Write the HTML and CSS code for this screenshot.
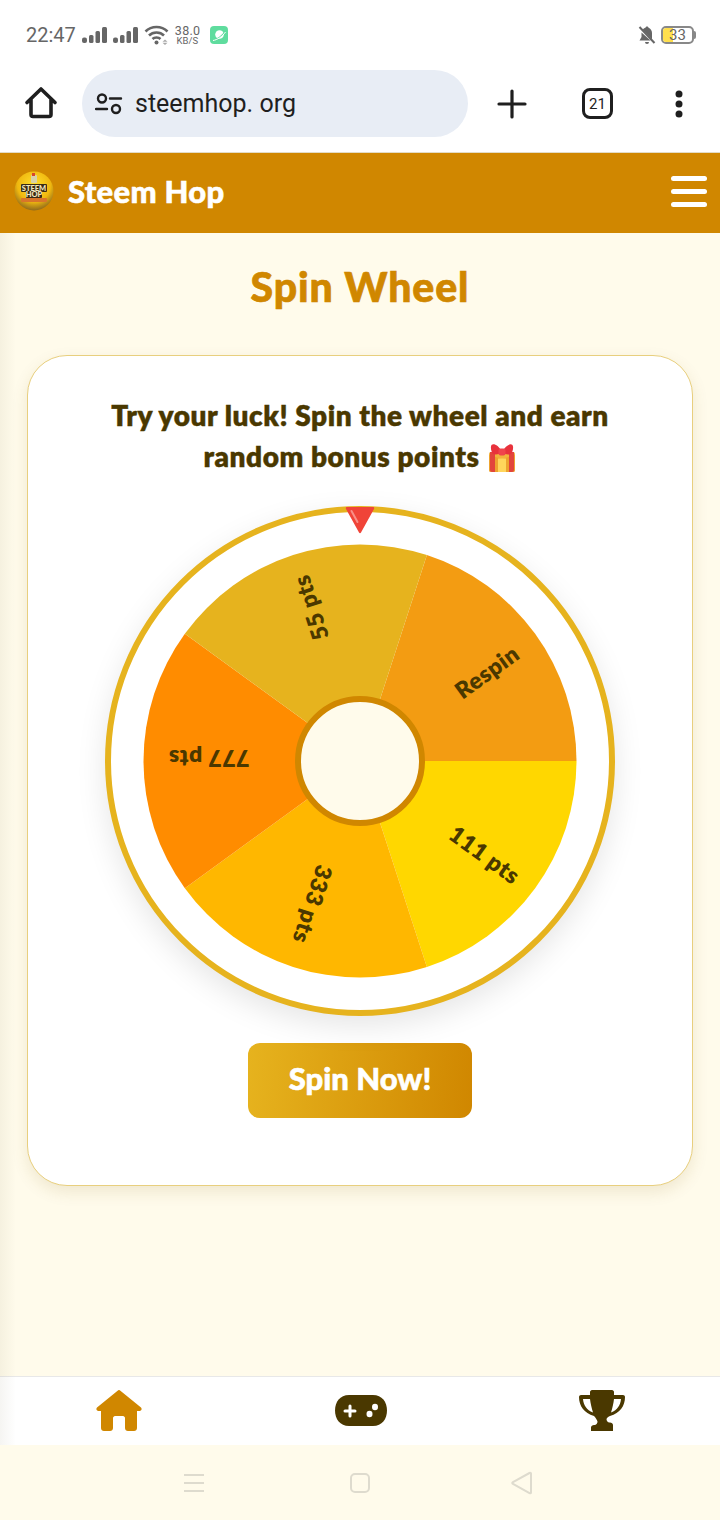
FILE: index.html
```html
<!DOCTYPE html>
<html>
	<head>
		<meta charset="UTF-8">
		<title>Steem Hop</title>
		<link rel="stylesheet" href="styles.css">
	</head>
	<body>
		<div class="status">
			<div class="status-left">
				<span class="time">22:47</span>
				<svg class="signal" width="25" height="18" viewBox="0 0 25 18"><rect x="0" y="11.500" width="5" height="5.500" rx="2"/><rect x="7" y="9" width="4.500" height="8" rx="1.500"/><rect x="13.500" y="5" width="4.500" height="12" rx="1.500"/><rect x="20" y="1" width="5" height="16" rx="1.500"/></svg>
				<svg class="signal" width="25" height="18" viewBox="0 0 25 18"><rect x="0" y="11.500" width="5" height="5.500" rx="2"/><rect x="7" y="9" width="4.500" height="8" rx="1.500"/><rect x="13.500" y="5" width="4.500" height="12" rx="1.500"/><rect x="20" y="1" width="5" height="16" rx="1.500"/></svg>
				<svg class="wifi" width="25" height="20" viewBox="0 0 25 20"><path d="M1.500 6.500C7.500 .5 17.500 .5 23.500 6.500M5 10.500C9 6.500 16 6.500 20 10.500M8.500 14C10.500 12 14.500 12 16.500 14" fill="none" stroke="#666" stroke-width="2.600"/><circle cx="12.500" cy="17.500" r="2" fill="#666"/><path d="M21 14.500l2.500 2.300h-5zM21 20l2.500-2.300h-5z" fill="#aaa"/></svg>
				<span class="speed"><b>38.0</b><i>KB/S</i></span>
				<svg class="app-dot" width="18" height="18" viewBox="0 0 18 18"><rect width="18" height="18" rx="4" fill="#5fdc9e"/><circle cx="9.500" cy="8.500" r="4.300" fill="#fff"/><path d="M3 13.500C7 13.500 12 10 15.500 5" stroke="#5fdc9e" stroke-width="1.300" fill="none"/><path d="M3 14.500C7 14 12.500 10.500 15.500 6" stroke="#fff" stroke-width="1" fill="none"/></svg>
			</div>
			<div class="status-right">
				<svg width="18" height="20" viewBox="0 0 18 20"><path d="M9 1.500c-1 0-1.500.6-1.500 1.300C6.300 3 5.300 3.700 4.800 4.500L14 14.500V8c0-2.500-1.500-4.500-3.500-5.200 0-.7-.5-1.300-1.500-1.300zM3.500 7.500V12L1.500 15.500h11zM7 17a2 2 0 0 0 4 0z" fill="#666"/><path d="M1.500 2l15 16" stroke="#666" stroke-width="2"/></svg>
				<span class="battery"><span class="battery-fill"></span><span class="battery-num">33</span></span>
			</div>
		</div>

		<div class="toolbar">
			<svg width="34" height="34" viewBox="0 0 34 34"><path d="M3 16.500L17 3l14 13.500M7 13v15.500a2 2 0 0 0 2 2h16a2 2 0 0 0 2-2V13" fill="none" stroke="#1f1f1f" stroke-width="3.600" stroke-linejoin="round" stroke-linecap="round"/></svg>
			<div class="url">
				<svg width="28" height="24" viewBox="0 0 28 24"><circle cx="7" cy="6.500" r="4" fill="none" stroke="#1f1f1f" stroke-width="2.400"/><path d="M15 6.500h11M1 17h11" stroke="#1f1f1f" stroke-width="2.400" stroke-linecap="round"/><circle cx="21" cy="17" r="4" fill="none" stroke="#1f1f1f" stroke-width="2.400"/></svg>
				<span>steemhop. org</span>
			</div>
			<div class="tool-btns">
				<svg width="30" height="30" viewBox="0 0 30 30"><path d="M15 2v26M2 15h26" stroke="#1f1f1f" stroke-width="3.200" stroke-linecap="round"/></svg>
				<span class="tabs">21</span>
				<svg width="10" height="30" viewBox="0 0 10 30"><circle cx="5" cy="5" r="3.500" fill="#1f1f1f"/><circle cx="5" cy="15" r="3.500" fill="#1f1f1f"/><circle cx="5" cy="25" r="3.500" fill="#1f1f1f"/></svg>
			</div>
		</div>

		<header class="top">
			<div class="brand">
				<svg class="logo" width="40" height="42" viewBox="0 0 40 42">
					<defs>
						<radialGradient id="ball" cx="50%" cy="35%" r="65%">
							<stop offset="0" stop-color="#ffe02e"/>
							<stop offset="0.65" stop-color="#f0b80f"/>
							<stop offset="1" stop-color="#8f6a1c"/>
						</radialGradient>
					</defs>
					<circle cx="20" cy="21" r="19.500" fill="url(#ball)"/>
					<rect x="17" y="5" width="6" height="8" rx="1" fill="#d9d2a8"/>
					<rect x="18" y="3" width="3" height="3" fill="#d8452c"/>
					<rect x="7" y="14" width="26" height="8" rx="1" fill="#3a2c14"/>
					<rect x="12" y="21" width="16" height="7" rx="1" fill="#3a2c14"/>
					<rect x="7" y="28" width="26" height="4" rx="1" fill="#d9752a"/>
					<text class="logo-text" x="20" y="20.500">STEEM</text>
					<text class="logo-text" x="20" y="27">HOP</text>
				</svg>
				<span class="brand-name">Steem Hop</span>
			</div>
			<div class="burger"><i></i><i></i><i></i></div>
		</header>

		<main class="content">
			<h1>Spin Wheel</h1>
			<section class="card">
				<p class="lead">Try your luck! Spin the wheel and earn random bonus points
					<svg class="gift" width="30" height="30" viewBox="0 0 30 30"><rect x="2" y="9" width="26" height="20" rx="2" fill="#f2b33d"/><path d="M2 12l13 4 13-4v15a2 2 0 0 1-2 2H4a2 2 0 0 1-2-2z" fill="#eda32f"/><path d="M11 15.500h8V29h-8z" fill="#ffd65c"/><path d="M3 9h5v20H5a2 2 0 0 1-2-2z" fill="#e2453c"/><path d="M22 9h5v18a2 2 0 0 1-2 2h-3z" fill="#e2453c"/><path d="M15 9C11 1 4.500 -.5 4 3.500c-.5 3 1 6.500 2 7.500 3 1 6 .5 9-2z" fill="#e8323c"/><path d="M15 9c4-8 10.500-9.500 11-5.500.5 3-1 6.500-2 7.500-3 1-6 .5-9-2z" fill="#e8323c"/><rect x="11.500" y="5.500" width="7" height="7" rx="2" fill="#f0454c"/></svg>
				</p>
				<div class="wheel-box">
					<svg class="pointer" width="30" height="28" viewBox="0 0 30 28"><path d="M2 1h26c1 0 1.500 1 1 2L16 26.500c-.5 1-1.500 1-2 0L1 3c-.5-1 0-2 1-2z" fill="#f04438"/><path d="M6.500 5l6 11" stroke="#f98f87" stroke-width="2" stroke-linecap="round"/></svg>
					<div class="wheel">
						<svg width="498" height="498" viewBox="0 0 498 498">
							<path d="M249 249L315.900 43.100A216.500 216.500 0 0 1 465.500 249Z" fill="#f39c12"/>
							<path d="M249 249L465.500 249A216.500 216.500 0 0 1 315.900 454.900Z" fill="#ffd700"/>
							<path d="M249 249L315.900 454.900A216.500 216.500 0 0 1 73.850 376.260Z" fill="#ffb700"/>
							<path d="M249 249L73.850 376.260A216.500 216.500 0 0 1 73.850 121.740Z" fill="#ff8c00"/>
							<path d="M249 249L73.850 121.740A216.500 216.500 0 0 1 315.900 43.100Z" fill="#e6b31e"/>
							<g class="labels">
								<text x="404" y="251" transform="rotate(-36 249 249)">Respin</text>
								<text x="405" y="251" transform="rotate(36 249 249)">111 pts</text>
								<text x="400" y="249" transform="rotate(108 249 249)">333 pts</text>
								<text x="400" y="251" transform="rotate(180 249 249)">777 pts</text>
								<text x="410" y="249" transform="rotate(252 249 249)">55 pts</text>
							</g>
							<circle cx="249" cy="249" r="62" fill="#fffbeb" stroke="#d08700" stroke-width="6"/>
						</svg>
					</div>
				</div>
				<button class="spin"><span>Spin Now!</span></button>
			</section>
		</main>

		<nav class="tabs-bar">
			<svg width="46" height="41" viewBox="0 0 46 41"><path d="M23 0c.6 0 1 .3 1.400.7L45 17.500c1.200 1.300.6 3.500-1.500 3.500H41v17c0 1.700-1.300 3-3 3h-6c-1.700 0-3-1.300-3-3V28c0-1-1-2-2-2h-8c-1 0-2 1-2 2v10c0 1.700-1.300 3-3 3H8c-1.700 0-3-1.300-3-3V21H2.500C.4 21-.2 18.800 1 17.500L21.600.7C22 .3 22.400 0 23 0z" fill="#d08700"/></svg>
			<svg width="52" height="31" viewBox="0 0 52 31"><path d="M14 0h24c9 0 14 7 14 15.500S47 31 38 31H14C5 31 0 24 0 15.500S5 0 14 0z" fill="#4a3800"/><path d="M15 11v10M10 16h10" stroke="#fff" stroke-width="3" stroke-linecap="round"/><ellipse cx="40" cy="12" rx="3" ry="3.300" fill="#fff"/><ellipse cx="34.500" cy="19" rx="3" ry="3.300" fill="#fff"/></svg>
			<svg width="46" height="41" viewBox="0 0 46 41"><path fill-rule="evenodd" d="M11 2c0-1 1-2 2-2h20c1 0 2 1 2 2v3h9c1 0 2 .8 2 2 0 9-5 16-15 19-1.500.6-3 1.500-3.500 3 0 2 1 3 2.500 3.500h1c1.500 0 3 1 3 2.500V41H12v-3.500c0-1.500 1.500-2.500 3-2.500h1c1.500-.5 2.500-1.500 2.500-3.500C18 30 16.500 27.500 15 26 5 23 0 16 0 7c0-1.200 1-2 2-2h9zM4 9c.5 6 3.500 11 10 13.500C12.500 18 11.500 13 11 9zm38 0h-7c-.5 4-1.500 9-3 13.500C38.500 20 41.500 15 42 9z" fill="#4a3800"/></svg>
		</nav>

		<div class="sys-nav">
			<svg width="22" height="20" viewBox="0 0 22 20"><path d="M1 2h20M1 10h20M1 18h20" stroke="#dedbce" stroke-width="2"/></svg>
			<svg width="22" height="22" viewBox="0 0 22 22"><rect x="2" y="2" width="18" height="18" rx="4" fill="none" stroke="#dedbce" stroke-width="2"/></svg>
			<svg class="sys-back" width="24" height="24" viewBox="0 0 24 24"><path d="M21 2.500v19c0 1-.8 1-1.500.5L3 13c-1-.7-1-1.300 0-2L19.500 2c.7-.4 1.500 0 1.500.5z" fill="none" stroke="#dedbce" stroke-width="2"/></svg>
		</div>

		<div class="side-shade"></div>
	</body>
</html>
```

FILE: styles.css
```css
* {
	box-sizing: border-box;
}

body {
	margin: 0;
	width: 720px;
	height: 1520px;
	overflow: hidden;
	display: flex;
	flex-direction: column;
	position: relative;
	background: #fffbeb;
	font-family: "Lato", "Noto Sans", sans-serif;
	color: #4a3800;
}

/* status bar */
.status {
	height: 70px;
	flex: none;
	background: #fff;
	display: flex;
	justify-content: space-between;
	align-items: center;
	padding: 0 26px 0 26px;
}

.status-left {
	display: flex;
	align-items: center;
	gap: 6px;
}

.status-right {
	display: flex;
	align-items: center;
	gap: 5px;
}

.time {
	font: 20px "Roboto", sans-serif;
	color: #666;
}

.signal {
	fill: #666;
}

.speed {
	display: flex;
	flex-direction: column;
	width: 25px;
	font-family: "Roboto", sans-serif;
	color: #666;
	text-align: center;
}

.speed b {
	font-size: 12.5px;
	font-weight: 400;
	letter-spacing: 0.3px;
	line-height: 11px;
}

.speed i {
	font-size: 9.5px;
	font-style: normal;
	line-height: 10px;
}

.app-dot {
	margin-left: 4px;
}

.battery {
	width: 33px;
	height: 18px;
	border: 2px solid #888;
	border-radius: 5px;
	position: relative;
	display: flex;
	align-items: center;
	justify-content: center;
	font: 15px "Roboto", sans-serif;
	color: #666;
}

.battery::after {
	content: "";
	position: absolute;
	right: -4px;
	top: 3px;
	width: 2px;
	height: 8px;
	border-radius: 0 2px 2px 0;
	background: #888;
}

.battery-fill {
	position: absolute;
	left: 0;
	top: 0;
	bottom: 0;
	width: 10px;
	border-radius: 3px 0 0 3px;
	background: #ffdf4d;
}

.battery-num {
	position: relative;
}

/* browser toolbar */
.toolbar {
	height: 83px;
	flex: none;
	background: #fff;
	border-bottom: 1px solid #e3dcc6;
	display: flex;
	align-items: flex-start;
	padding-left: 24px;
}

.toolbar > svg {
	margin-top: 16px;
}

.url {
	width: 386px;
	height: 67px;
	margin-left: 24px;
	border-radius: 34px;
	background: #e8edf5;
	display: flex;
	align-items: center;
	gap: 12px;
	padding-left: 13px;
	font: 25px "Roboto", sans-serif;
	color: #1f1f1f;
}

.tool-btns {
	display: flex;
	align-items: center;
	height: 67px;
	margin-left: 29px;
	gap: 55px;
}

.tool-btns svg:last-child {
	margin-left: 6px;
}

.tabs {
	width: 31px;
	height: 31px;
	border: 3.500px solid #1f1f1f;
	border-radius: 8px;
	display: flex;
	align-items: center;
	justify-content: center;
	font: 15px "Roboto", sans-serif;
	color: #1f1f1f;
}

/* site header */
.top {
	height: 80px;
	flex: none;
	background: #d08700;
	display: flex;
	justify-content: space-between;
	align-items: center;
	padding: 0 13px 4px 14px;
}

.brand {
	display: flex;
	align-items: center;
	gap: 14px;
}

.logo-text {
	font-size: 7.5px;
	font-weight: 900;
	fill: #f3e7c0;
	text-anchor: middle;
}

.brand-name {
	font-size: 31px;
	font-weight: 900;
	letter-spacing: 0.3px;
	color: #fff;
	-webkit-text-stroke: 0.6px #fff;
}

.burger {
	display: flex;
	flex-direction: column;
	gap: 8px;
}

.burger i {
	display: block;
	width: 36px;
	height: 5px;
	border-radius: 3px;
	background: #fff;
}

/* main */
.content {
	flex: 1;
	padding: 0 27px;
}

h1 {
	margin: 30px 0 44px;
	height: 48px;
	font-size: 41px;
	line-height: 48px;
	font-weight: 900;
	letter-spacing: 0.9px;
	text-align: center;
	color: #d08700;
	-webkit-text-stroke: 0.7px #d08700;
}

.card {
	height: 831px;
	background: #fff;
	border: 1px solid #e8cf7e;
	border-radius: 40px;
	box-shadow: 0 6px 16px rgba(120, 90, 0, 0.12);
	padding: 39px 70px 0;
	display: flex;
	flex-direction: column;
	align-items: center;
}

.lead {
	margin: 0;
	font-size: 28px;
	line-height: 41px;
	font-weight: 800;
	letter-spacing: 0.55px;
	text-align: center;
	-webkit-text-stroke: 0.4px #4a3800;
}

.gift {
	vertical-align: -6px;
}

.wheel-box {
	margin-top: 29px;
	width: 510px;
	height: 510px;
	flex: none;
	position: relative;
}

.wheel {
	width: 510px;
	height: 510px;
	border: 6px solid #e6b31e;
	border-radius: 50%;
	background: #fff;
	box-shadow: 0 10px 30px rgba(0, 0, 0, 0.1);
}

.wheel svg {
	display: block;
}

.labels text {
	font-size: 23px;
	font-weight: 800;
	letter-spacing: 0.5px;
	fill: #4a3800;
	text-anchor: middle;
	dominant-baseline: central;
}

.pointer {
	position: absolute;
	left: 240px;
	top: 0;
	z-index: 2;
}

.spin {
	margin-top: 27px;
	width: 224px;
	height: 75px;
	flex: none;
	padding: 0 0 6px;
	border: 0;
	border-radius: 12px;
	background: linear-gradient(95deg, #e6b31e, #d08700);
	font-family: inherit;
	font-size: 31px;
	font-weight: 900;
	color: #fff;
	-webkit-text-stroke: 0.6px #fff;
}

/* bottom tabs */
.tabs-bar {
	height: 69px;
	flex: none;
	background: #fff;
	border-top: 1px solid #e8e8e8;
	display: grid;
	grid-template-columns: 238px 1fr 237px;
	justify-items: center;
	align-items: center;
	padding-bottom: 2px;
}

.sys-nav {
	height: 75px;
	flex: none;
	display: flex;
	align-items: center;
	gap: 144px;
	padding-left: 183px;
}

.sys-back {
	margin-left: -5px;
}

.side-shade {
	position: absolute;
	left: 0;
	top: 233px;
	width: 16px;
	height: 1212px;
	background: linear-gradient(90deg, rgba(90, 80, 40, 0.06), rgba(90, 80, 40, 0));
	pointer-events: none;
}
```
